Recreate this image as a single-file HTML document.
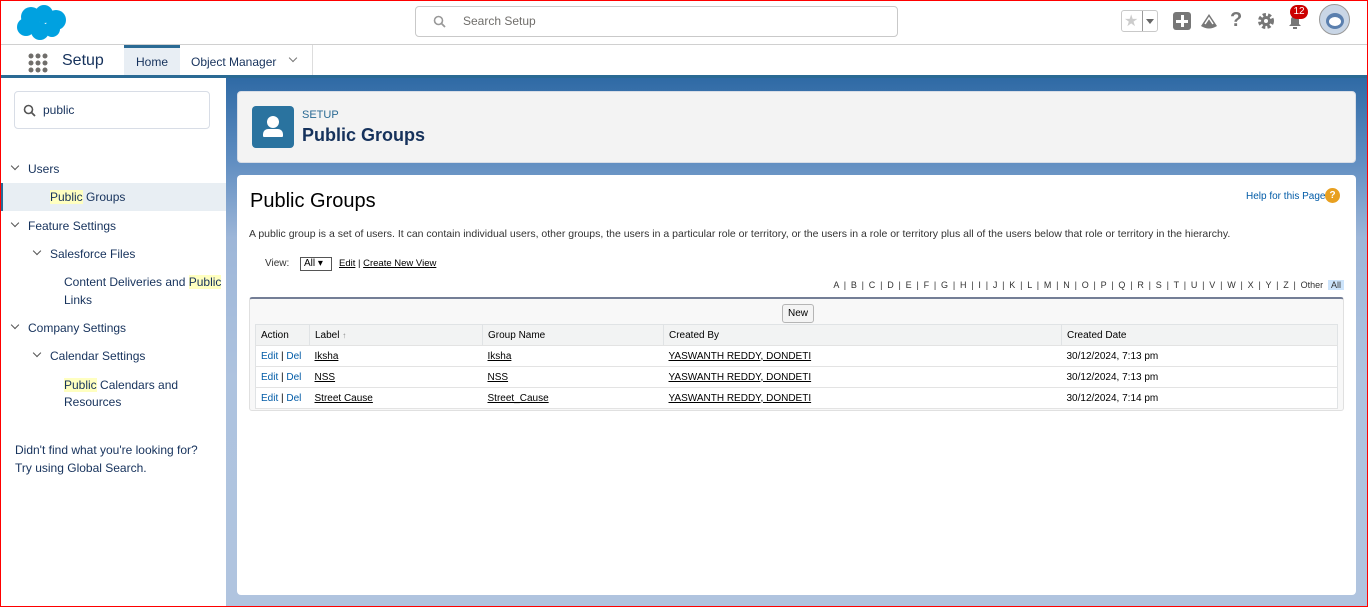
<!DOCTYPE html>
<html><head><meta charset="utf-8"><style>
*{box-sizing:border-box;margin:0;padding:0}
body{width:1368px;height:607px;overflow:hidden;font-family:"Liberation Sans",Arial,sans-serif;background:#fff;position:relative}
.frame{position:absolute;inset:0;border:1px solid #f00;pointer-events:none;z-index:50}
.abs{position:absolute}
.top{left:0;top:0;width:1368px;height:45px;border-bottom:1px solid #d0d0d0;background:#fff}
.nav{left:0;top:45px;width:1368px;height:33px;background:#fff;border-bottom:3px solid #2a6a94}
.search{left:415px;top:6px;width:483px;height:31px;border:1px solid #c9c9c9;border-radius:4px}
.bg{left:226px;top:78px;width:1142px;height:529px;background:linear-gradient(#2f6aa5 0px,#5e8cc0 80px,#9db6d8 160px,#aec3df 300px,#b0c4df)}
.side{left:0;top:78px;width:226px;height:529px;background:#fff}
.si{position:absolute;font-size:12px;color:#16325c;white-space:nowrap}
.hl{background:#ffffc0}
.chev{position:absolute;width:6px;height:6px;border-right:1.3px solid #555;border-bottom:1.3px solid #555;transform:rotate(45deg)}
.card{background:#f3f3f3;border:1px solid #d8dde6;border-radius:4px}
.main{left:237px;top:175px;width:1119px;height:420px;background:#fff;border-radius:4px}
.t{font-size:11px;color:#000;white-space:nowrap}
table{border-collapse:collapse;font-size:10px}
td,th{height:21px;padding:0 5px;text-align:left;font-weight:normal;border-bottom:1px solid #e3e3e3;white-space:nowrap}
th{background:#f2f3f3;border-right:1px solid #e0e3e5;color:#000}
a{color:#000;text-decoration:underline}
.blue{color:#015ba7;text-decoration:none}
</style></head><body>
<div class="frame"></div>
<div class="abs top">
 <svg class="abs" style="left:14px;top:4px" width="54" height="37" viewBox="0 0 54 37"><g fill="#00a1e0"><circle cx="17" cy="13" r="10"/><circle cx="30" cy="10" r="9"/><circle cx="42" cy="16" r="10"/><circle cx="12" cy="23" r="9"/><circle cx="26" cy="27" r="9"/><circle cx="38" cy="25" r="8"/></g></svg>
 <div class="abs search"><svg class="abs" style="left:17px;top:8px" width="13" height="13" viewBox="0 0 13 13"><circle cx="5.5" cy="5.5" r="4" fill="none" stroke="#999" stroke-width="1.6"/><path d="M8.5 8.5L12 12" stroke="#999" stroke-width="1.8"/></svg><span class="abs" style="left:47px;top:7px;font-size:12px;color:#706e6b">Search Setup</span></div>
 <div class="abs" style="left:1121px;top:10px;width:37px;height:22px;border:1px solid #c9c9c9;border-radius:3px"><span class="abs" style="left:2px;top:0px;color:#ccc;font-size:16px">★</span><div class="abs" style="left:20px;top:0;width:1px;height:20px;background:#999"></div><div class="abs" style="left:24px;top:8px;border:4px solid transparent;border-top:5px solid #666"></div></div>
 <div class="abs" style="left:1173px;top:12px;width:18px;height:18px;background:#777;border-radius:3px"><div class="abs" style="left:3px;top:7.5px;width:12px;height:3px;background:#fff"></div><div class="abs" style="left:7.5px;top:3px;width:3px;height:12px;background:#fff"></div></div>
 <svg class="abs" style="left:1200px;top:12px" width="18" height="18" viewBox="0 0 18 18"><path d="M1 14L9 2L17 14Q9 19 1 14Z" fill="#777"/><path d="M5 12L9 6L13 12" fill="none" stroke="#fff" stroke-width="1.5"/></svg>
 <span class="abs" style="left:1230px;top:9px;font-size:20px;font-weight:bold;color:#777">?</span>
 <svg class="abs" style="left:1257px;top:12px" width="18" height="18" viewBox="0 0 18 18"><circle cx="9" cy="9" r="6" fill="none" stroke="#777" stroke-width="4" stroke-dasharray="3 2"/><circle cx="9" cy="9" r="5" fill="#777"/><circle cx="9" cy="9" r="2" fill="#fff"/></svg>
 <svg class="abs" style="left:1285px;top:12px" width="20" height="20" viewBox="0 0 20 20"><path d="M4 14L6 12V8Q6 4 10 4Q14 4 14 8V12L16 14Z" fill="#777"/><rect x="8" y="15" width="4" height="2" fill="#777"/></svg>
 <div class="abs" style="left:1290px;top:5px;width:18px;height:14px;background:#c00;border-radius:7px;color:#fff;font-size:10px;text-align:center;line-height:14px">12</div>
 <div class="abs" style="left:1319px;top:4px;width:31px;height:31px;border-radius:50%;background:#c9d6e6;border:1px solid #999"><div class="abs" style="left:6px;top:8px;width:18px;height:16px;border-radius:50%;background:#5a7fae"></div><div class="abs" style="left:9px;top:12px;width:12px;height:9px;border-radius:50%;background:#fff"></div></div>
</div>
<div class="abs nav">
 <svg class="abs" style="left:28px;top:8px" width="20" height="20"><g fill="#706e6b"><circle cx="3" cy="3" r="2.5"/><circle cx="10" cy="3" r="2.5"/><circle cx="17" cy="3" r="2.5"/><circle cx="3" cy="10" r="2.5"/><circle cx="10" cy="10" r="2.5"/><circle cx="17" cy="10" r="2.5"/><circle cx="3" cy="17" r="2.5"/><circle cx="10" cy="17" r="2.5"/><circle cx="17" cy="17" r="2.5"/></g></svg>
 <span class="abs" style="left:62px;top:7px;font-size:16px;color:#16325c">Setup</span>
 <div class="abs" style="left:124px;top:0;width:56px;height:30px;background:#e8eef4;border-top:3px solid #2a6a94"><span class="abs" style="left:12px;top:7px;font-size:12px;color:#16325c">Home</span></div>
 <span class="abs" style="left:191px;top:10px;font-size:12px;color:#16325c">Object Manager</span>
 <div class="chev" style="left:290px;top:10px;border-color:#777"></div>
 <div class="abs" style="left:312px;top:0;width:1px;height:30px;background:#ddd"></div>
</div>
<div class="abs bg"></div>
<div class="abs side">
 <div class="abs" style="left:14px;top:13px;width:196px;height:38px;border:1px solid #d8dde6;border-radius:4px"><svg class="abs" style="left:8px;top:12px" width="13" height="13" viewBox="0 0 13 13"><circle cx="5.5" cy="5.5" r="4" fill="none" stroke="#555" stroke-width="1.6"/><path d="M8.5 8.5L12 12" stroke="#555" stroke-width="1.8"/></svg><span class="abs" style="left:28px;top:11px;font-size:12px;color:#16325c">public</span></div>
 <div class="chev" style="left:12px;top:85px"></div><span class="si" style="left:28px;top:84px">Users</span>
 <div class="abs" style="left:0;top:105px;width:226px;height:28px;background:#e8eef3;border-left:3px solid #2a6a94"></div>
 <span class="si" style="left:50px;top:112px"><span class="hl">Public</span> Groups</span>
 <div class="chev" style="left:12px;top:142px"></div><span class="si" style="left:28px;top:141px">Feature Settings</span>
 <div class="chev" style="left:34px;top:170px"></div><span class="si" style="left:50px;top:169px">Salesforce Files</span>
 <span class="si" style="left:64px;top:197px">Content Deliveries and <span class="hl">Public</span></span>
 <span class="si" style="left:64px;top:215px">Links</span>
 <div class="chev" style="left:12px;top:244px"></div><span class="si" style="left:28px;top:243px">Company Settings</span>
 <div class="chev" style="left:34px;top:272px"></div><span class="si" style="left:50px;top:271px">Calendar Settings</span>
 <span class="si" style="left:64px;top:300px"><span class="hl">Public</span> Calendars and</span>
 <span class="si" style="left:64px;top:317px">Resources</span>
 <span class="si" style="left:15px;top:365px">Didn't find what you're looking for?</span>
 <span class="si" style="left:15px;top:383px">Try using Global Search.</span>
</div>
<div class="abs card" style="left:237px;top:91px;width:1119px;height:72px">
 <div class="abs" style="left:14px;top:14px;width:42px;height:42px;background:#2a739f;border-radius:4px"><div class="abs" style="left:15px;top:10px;width:12px;height:12px;border-radius:50%;background:#fff"></div><div class="abs" style="left:11px;top:23px;width:20px;height:8px;border-radius:5px 5px 1px 1px;background:#fff"></div></div>
 <span class="abs" style="left:64px;top:17px;font-size:11px;color:#2a6a94">SETUP</span>
 <span class="abs" style="left:64px;top:33px;font-size:18px;font-weight:bold;color:#16325c">Public Groups</span>
</div>
<div class="abs main">
 <span class="abs" style="left:13px;top:15px;font-size:20px;color:#000">Public Groups</span>
 <span class="abs" style="left:1009px;top:16px;font-size:10px;color:#015ba7">Help for this Page</span>
 <div class="abs" style="left:1088px;top:13px;width:15px;height:15px;border-radius:50%;background:#e8a020;color:#fff;font-size:10px;font-weight:bold;text-align:center;line-height:15px">?</div>
 <span class="abs t" style="left:12px;top:53px;color:#333;font-size:10.5px">A public group is a set of users. It can contain individual users, other groups, the users in a particular role or territory, or the users in a role or territory plus all of the users below that role or territory in the hierarchy.</span>
 <span class="abs t" style="left:28px;top:83px;font-size:10px;color:#333">View:</span>
 <div class="abs" style="left:63px;top:82px;width:32px;height:14px;border:1px solid #555;font-size:10px;padding-left:3px;line-height:12px">All ▾</div>
 <span class="abs t" style="left:102px;top:83px;font-size:9.5px"><a>Edit</a> | <a>Create New View</a></span>
 <span class="abs t" style="right:12px;top:105px;font-size:9px;color:#333;word-spacing:2.3px">A | B | C | D | E | F | G | H | I | J | K | L | M | N | O | P | Q | R | S | T | U | V | W | X | Y | Z | Other <span style="background:#cde4fb;padding:0 3px">All</span></span>
 <div class="abs" style="left:12px;top:122px;width:1095px;height:114px;background:#f8f8f8;border-top:2px solid #747e96;border-radius:3px;border-left:1px solid #e0e0e0;border-right:1px solid #e0e0e0;border-bottom:1px solid #e0e0e0">
  <div class="abs" style="left:532px;top:5px;width:32px;height:19px;border:1px solid #b5b5b5;border-radius:3px;background:#f4f4f4;font-size:10px;text-align:center;line-height:17px">New</div>
  <table class="abs" style="left:5px;top:25px;width:1083px;background:#fff;border:1px solid #e0e3e5">
   <tr><th style="width:54px">Action</th><th style="width:173px">Label <span style="color:#888;font-size:8px">↑</span></th><th style="width:181px">Group Name</th><th style="width:398px">Created By</th><th>Created Date</th></tr>
   <tr><td><span class="blue">Edit</span> | <span class="blue">Del</span></td><td><a>Iksha</a></td><td><a>Iksha</a></td><td><a>YASWANTH REDDY, DONDETI</a></td><td>30/12/2024, 7:13 pm</td></tr>
   <tr><td><span class="blue">Edit</span> | <span class="blue">Del</span></td><td><a>NSS</a></td><td><a>NSS</a></td><td><a>YASWANTH REDDY, DONDETI</a></td><td>30/12/2024, 7:13 pm</td></tr>
   <tr><td><span class="blue">Edit</span> | <span class="blue">Del</span></td><td><a>Street Cause</a></td><td><a>Street_Cause</a></td><td><a>YASWANTH REDDY, DONDETI</a></td><td>30/12/2024, 7:14 pm</td></tr>
  </table>
 </div>
</div>
</body></html>
